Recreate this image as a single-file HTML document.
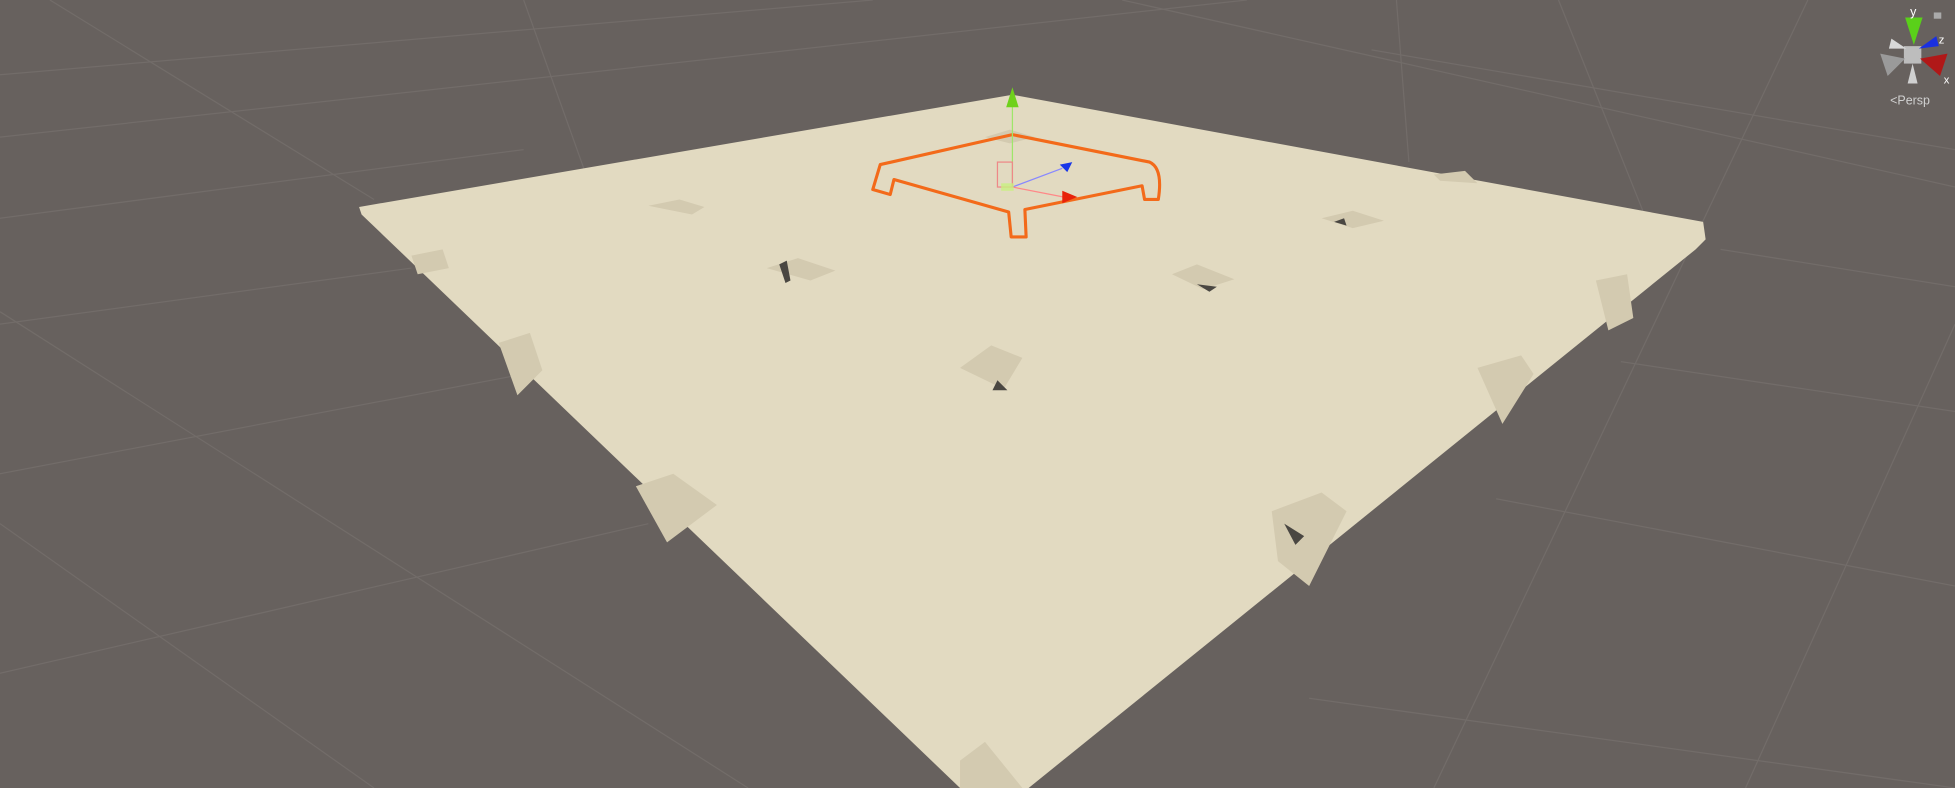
<!DOCTYPE html>
<html><head><style>
html,body{margin:0;padding:0;width:1955px;height:788px;overflow:hidden;background:#67615e;}
svg{display:block}
</style></head><body>
<svg width="1955" height="788" viewBox="0 0 1568 632" preserveAspectRatio="none" xmlns="http://www.w3.org/2000/svg">
<rect width="1568" height="632" fill="#67615e"/>
<g stroke="#726c69" stroke-width="1" fill="none">
<line x1="0" y1="60" x2="700" y2="0"/><line x1="0" y1="110" x2="1000" y2="0"/>
<line x1="0" y1="175" x2="420" y2="120"/><line x1="0" y1="260" x2="330" y2="215"/>
<line x1="0" y1="380" x2="420" y2="300"/><line x1="0" y1="540" x2="520" y2="420"/>
<line x1="900" y1="0" x2="1568" y2="150"/><line x1="1100" y1="40" x2="1568" y2="120"/>
<line x1="1380" y1="200" x2="1568" y2="230"/><line x1="1300" y1="290" x2="1568" y2="330"/>
<line x1="1200" y1="400" x2="1568" y2="470"/><line x1="1050" y1="560" x2="1568" y2="632"/>
<line x1="40" y1="0" x2="300" y2="160"/><line x1="0" y1="250" x2="600" y2="632"/>
<line x1="0" y1="420" x2="300" y2="632"/><line x1="1450" y1="0" x2="1150" y2="632"/>
<line x1="1568" y1="260" x2="1400" y2="632"/><line x1="1250" y1="0" x2="1320" y2="175"/>
<line x1="420" y1="0" x2="470" y2="140"/><line x1="1120" y1="0" x2="1130" y2="130"/>
</g>
<polygon points="288,166 812,76 1366,178 1368,192 1360,200 825,632 770,632 290,172" fill="#e2dac1"/>
<g fill="#d3cab0">
<path d="M520,165 l25,-5 l20,6 l-10,6 z"/><path d="M615,215 l25,-8 l30,10 l-20,8 z"/>
<path d="M940,220 l20,-8 l30,12 l-25,8 z"/><path d="M1060,175 l25,-6 l25,8 l-25,6 z"/>
<path d="M770,295 l25,-18 l25,10 l-15,25 z"/><path d="M400,275 l25,-8 l10,30 l-20,20 z"/>
<path d="M510,390 l30,-10 l35,25 l-40,30 z"/><path d="M1020,410 l40,-15 l20,15 l-30,60 l-25,-20 z"/>
<path d="M1185,295 l35,-10 l10,15 l-25,40 z"/><path d="M1280,225 l25,-5 l5,35 l-20,10 z"/>
<path d="M330,205 l25,-5 l5,15 l-25,5 z"/><path d="M1150,140 l25,-3 l10,10 l-30,-2 z"/>
<path d="M770,610 l20,-15 l30,37 l-50,0 z"/><path d="M790,110 l20,-6 l20,6 l-20,5 z"/>
</g>
<g fill="#4a4742">
<path d="M625,212 l6,-3 l3,16 l-4,2 z"/><path d="M960,228 l16,2 l-6,4 z"/><path d="M1070,178 l8,-3 l2,6 z"/>
<path d="M800,305 l8,8 l-12,0 z"/><path d="M1030,420 l16,10 l-7,7 z"/>
</g>
<path d="M812,108 L922,130 Q933,135 929,160 L918,160 L916,149 L822,168 L823,190 L811,190 L809,170 L717,144 L714,156 L700,152 L706,132 Z" fill="none" stroke="#f36a1a" stroke-width="2.5" stroke-linejoin="round"/>
<line x1="812" y1="80" x2="812" y2="150" stroke="#9ee66a" stroke-width="1"/>
<path d="M812,70 l-5,16 l10,0 z" fill="#6fd11c"/>
<rect x="800" y="130" width="12" height="20" fill="none" stroke="#e88" stroke-width="1"/>
<line x1="812" y1="150" x2="852" y2="135" stroke="#88f" stroke-width="1"/>
<path d="M850,132 l10,-2 l-4,8 z" fill="#1836e8"/>
<line x1="812" y1="150" x2="853" y2="158" stroke="#f88" stroke-width="1"/>
<path d="M852,153 l12,5 l-12,5 z" fill="#e8220a"/>
<rect x="803" y="147" width="10" height="6" fill="#c8f080" opacity="0.8"/>
<g transform="translate(1535,43)">
<rect x="-8" y="-6" width="14" height="14" fill="#bdbdbd"/>
<path d="M0,-7 l-7,-22 l14,0 z" fill="#5ad01a"/>
<path d="M4,-4 l14,-10 l2,8 z" fill="#1a30e0"/>
<path d="M5,4 l22,-4 l-6,18 z" fill="#b01818"/>
<path d="M-7,4 l-20,-4 l6,18 z" fill="#9a9a9a"/>
<path d="M-6,-4 l-12,-8 l-2,8 z" fill="#d8d8d8"/>
<path d="M-1,8 l-4,16 l8,0 z" fill="#d0d0d0"/>
<text x="-3" y="-30" font-family="Liberation Sans,sans-serif" font-size="10" fill="#fff">y</text>
<text x="20" y="-8" font-family="Liberation Sans,sans-serif" font-size="9" fill="#fff">z</text>
<text x="24" y="24" font-family="Liberation Sans,sans-serif" font-size="9" fill="#fff">x</text>
</g>
<rect x="1551" y="10" width="6" height="5" fill="#aaa"/>
<text x="1516" y="84" font-family="Liberation Sans,sans-serif" font-size="10" fill="#d0d0d0">&lt;Persp</text>
</svg>
</body></html>
